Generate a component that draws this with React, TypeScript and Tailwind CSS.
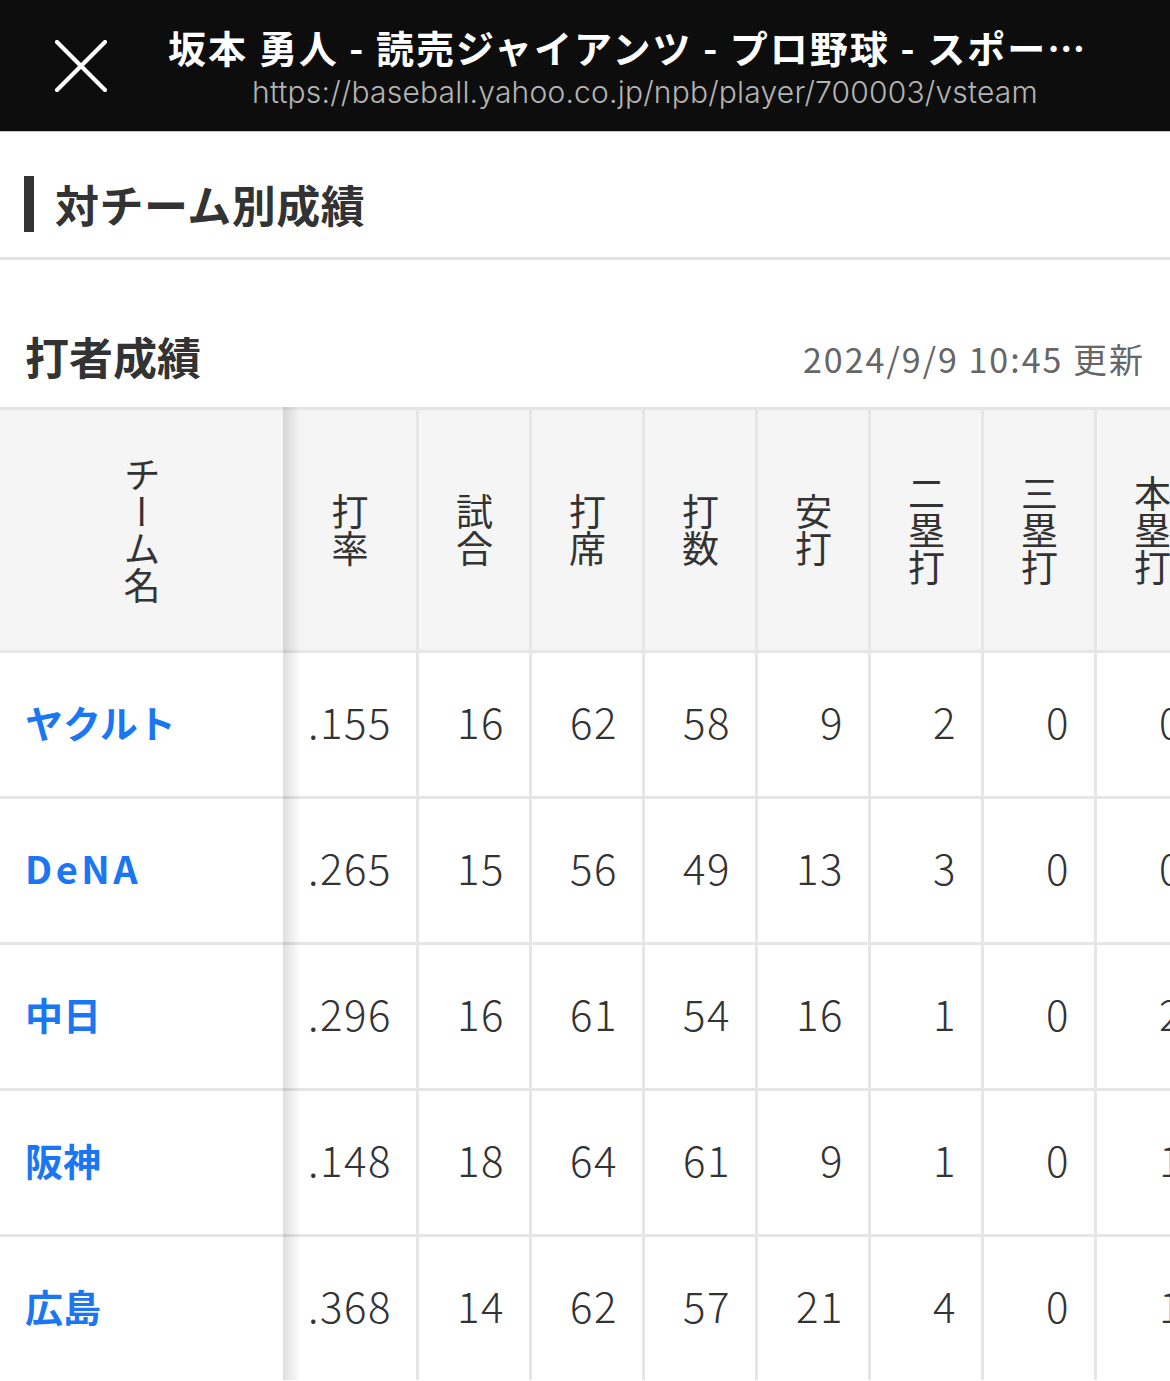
import React from "react";

const cjk = { fontFamily: '"Noto Sans CJK JP", "Noto Sans", sans-serif' };

const rows: [string, string[], string][] = [
  ["ヤクルト", [".155", "16", "62", "58", "9", "2", "0", "0"], ""],
  ["DeNA", [".265", "15", "56", "49", "13", "3", "0", "0"], "tracking-[3.5px]"],
  ["中日", [".296", "16", "61", "54", "16", "1", "0", "2"], ""],
  ["阪神", [".148", "18", "64", "61", "9", "1", "0", "1"], ""],
  ["広島", [".368", "14", "62", "57", "21", "4", "0", "1"], ""],
];

const heads = ["打率", "試合", "打席", "打数", "安打", "二塁打", "三塁打", "本塁打"];

function Shadow() {
  return (
    <div className="pointer-events-none absolute left-full -top-[3px] bottom-0 z-10 w-[18px] bg-gradient-to-r from-[rgba(0,0,0,0.13)] to-transparent" />
  );
}

export default function App() {
  return (
    <div className="w-[1170px] min-h-[1381px] overflow-hidden bg-white text-[#333]" style={cjk}>
      {/* top bar */}
      <div className="flex h-[132px] border-b border-[#c4c4c4] bg-[#0d0d0d]">
        <div className="flex w-[162px] shrink-0 items-center justify-center">
          <svg width="52" height="52" viewBox="0 0 52 52" fill="none">
            <path d="M2 2 L50 50 M50 2 L2 50" stroke="white" strokeWidth="4.2" strokeLinecap="round" />
          </svg>
        </div>
        <div className="flex min-w-0 flex-1 flex-col pl-[6px] pr-[48px] pt-[24px]">
          <div className="whitespace-nowrap text-[38px] font-bold leading-[46px] tracking-[2px] text-white">
            坂本 勇人 - 読売ジャイアンツ - プロ野球 - スポー…
          </div>
          <div
            className="mt-[3px] whitespace-nowrap text-center text-[30px] font-light leading-[38px] tracking-[0.2px] text-[#b4b4b4]"
            style={{ fontFamily: 'Inter, "Noto Sans", sans-serif' }}
          >
            https://baseball.yahoo.co.jp/npb/player/700003/vsteam
          </div>
        </div>
      </div>

      {/* section title */}
      <div className="flex items-center gap-[21px] pl-[24px] pt-[44px] pb-[25px]">
        <div className="h-[56px] w-[10px] bg-[#333]" />
        <div className="text-[44px] font-bold leading-[56px] tracking-[0.5px] text-[#333]">対チーム別成績</div>
      </div>
      <div className="h-[3px] bg-[#e3e3e3]" />

      {/* sub title */}
      <div className="flex h-[147px] items-center justify-between pl-[25px] pr-[25px] pt-[44px]">
        <div className="text-[44px] font-bold leading-[50px] text-[#333]">打者成績</div>
        <div className="pt-[6px] text-[34px] leading-[40px] tracking-[2px] text-[#666]">2024/9/9 10:45 更新</div>
      </div>

      {/* table */}
      <div className="w-max border-t-[3px] border-[#e6e6e6]">
        <div className="flex h-[240px] bg-[#f5f5f5]">
          <div className="relative flex w-[283px] shrink-0 items-center justify-center">
            <span className="text-[37px] leading-[37px] [writing-mode:vertical-rl]">チーム名</span>
            <Shadow />
          </div>
          {heads.map((h, i) => (
            <div
              key={h}
              className={
                i === 0
                  ? "flex w-[133px] shrink-0 items-center justify-center"
                  : "flex w-[113px] shrink-0 items-center justify-center border-l-[3px] border-[#e6e6e6]"
              }
            >
              <span className="text-[37px] leading-[37px] [writing-mode:vertical-rl]">{h}</span>
            </div>
          ))}
        </div>
        {rows.map(([team, vals, extra]) => (
          <div key={team} className="flex h-[146px] border-t-[3px] border-[#e6e6e6]">
            <div className="relative flex w-[283px] shrink-0 items-center pb-[7px] pl-[25px]">
              <span className={"text-[38px] font-bold text-[#1b76f3] " + extra}>{team}</span>
              <Shadow />
            </div>
            {vals.map((v, i) => (
              <div
                key={i}
                className={
                  i === 0
                    ? "flex w-[133px] shrink-0 items-center justify-end pb-[8px] pr-[24px]"
                    : "flex w-[113px] shrink-0 items-center justify-end border-l-[3px] border-[#e6e6e6] pb-[8px] pr-[24px]"
                }
              >
                <span className="text-[42px] font-light tracking-[1.5px] text-[#333]">{v}</span>
              </div>
            ))}
          </div>
        ))}
      </div>
    </div>
  );
}
